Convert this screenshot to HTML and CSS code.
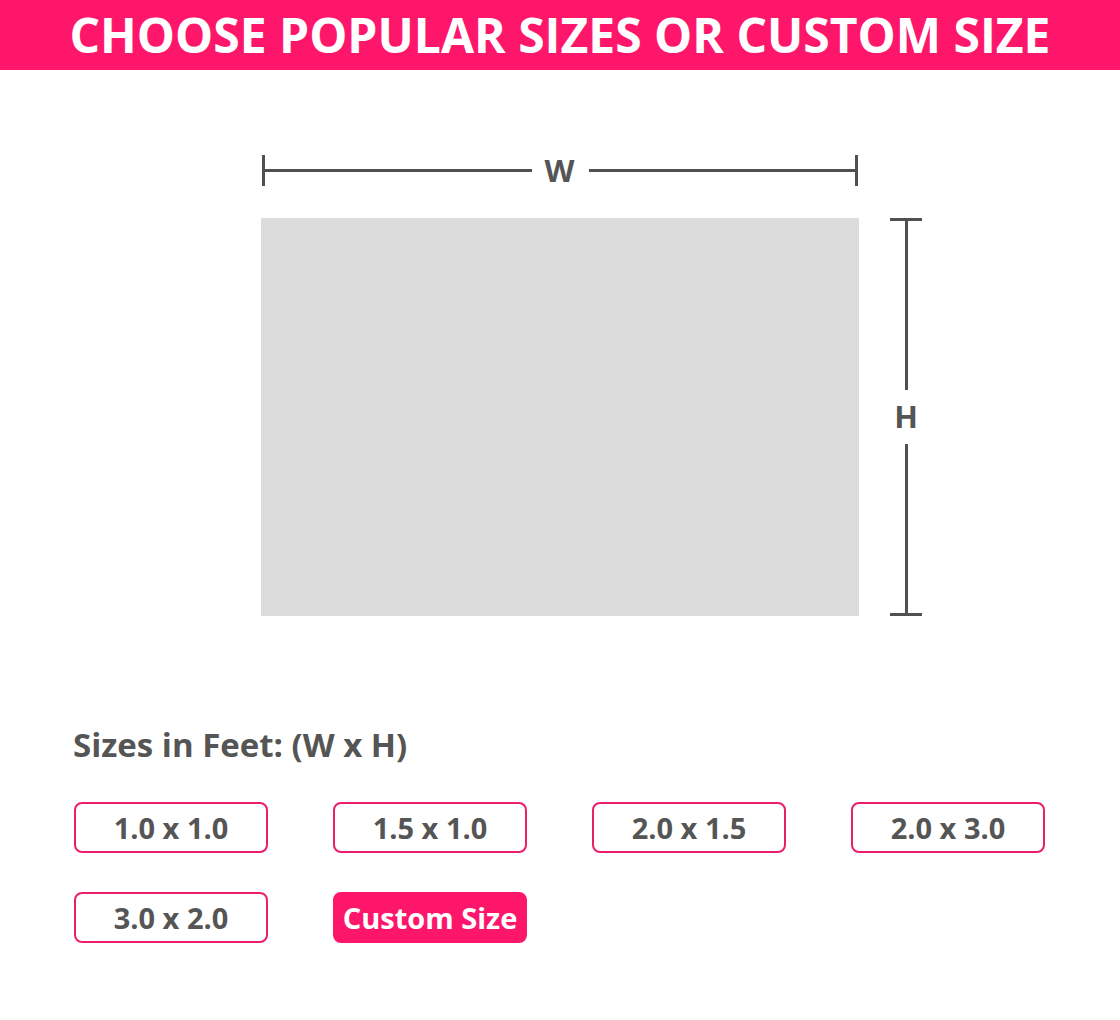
FILE: index.html
```html
<!DOCTYPE html>
<html lang="en">
<head>
<meta charset="utf-8">
<title>Choose Size</title>
<link rel="stylesheet" href="styles.css">
</head>
<body>
<header class="banner">
  <h1 class="banner-title">CHOOSE POPULAR SIZES OR CUSTOM SIZE</h1>
</header>
<main class="content">
  <section class="diagram">
    <div class="dim-w">
      <span class="tick-v"></span>
      <span class="line-h"></span>
      <span class="dim-label w-label">W</span>
      <span class="line-h"></span>
      <span class="tick-v"></span>
    </div>
    <div class="spacer"></div>
    <div class="canvas"></div>
    <div class="dim-h">
      <span class="tick-h"></span>
      <span class="line-v"></span>
      <span class="dim-label h-label">H</span>
      <span class="line-v"></span>
      <span class="tick-h"></span>
    </div>
  </section>
  <section class="sizes">
    <h2 class="sizes-title">Sizes in Feet: (W x H)</h2>
    <div class="size-grid">
      <button class="size-btn">1.0 x 1.0</button>
      <button class="size-btn">1.5 x 1.0</button>
      <button class="size-btn">2.0 x 1.5</button>
      <button class="size-btn">2.0 x 3.0</button>
      <button class="size-btn">3.0 x 2.0</button>
      <button class="size-btn size-btn-active">Custom Size</button>
    </div>
  </section>
</main>
</body>
</html>
```
FILE: styles.css
```css
* { box-sizing: border-box; }
html, body { margin: 0; padding: 0; background: #ffffff; }
body {
  font-family: "Open Sans", "Liberation Sans", sans-serif;
  color: #555555;
  width: 1120px;
}
.banner {
  background: #fe166b;
  height: 70px;
  display: flex;
  align-items: center;
  justify-content: center;
}
.banner-title {
  margin: 0;
  color: #ffffff;
  font-size: 48px;
  font-weight: 700;
  line-height: 1;
  letter-spacing: 0;
}
.content {
  padding-top: 85px;
}
.diagram {
  display: grid;
  grid-template-columns: 598px 32px;
  grid-template-rows: 30px 398px;
  column-gap: 31px;
  row-gap: 33px;
  margin-left: 261px;
}
.dim-w {
  display: flex;
  align-items: center;
  padding: 0 1px;
}
.tick-v {
  width: 3px;
  height: 31px;
  background: #505050;
  flex: none;
}
.line-h {
  flex: 1;
  height: 3px;
  background: #505050;
}
.dim-label {
  font-weight: 700;
  font-size: 31px;
  line-height: 1;
  color: #555555;
  flex: none;
}
.w-label { padding: 0 14px 0 13px; }
.canvas {
  background: #dcdcdc;
}
.dim-h {
  display: flex;
  flex-direction: column;
  align-items: center;
}
.tick-h {
  width: 32px;
  height: 3px;
  background: #505050;
  flex: none;
}
.line-v {
  flex: 1;
  width: 3px;
  background: #505050;
}
.h-label { padding: 11px 0 12px; }
.sizes {
  padding: 110px 0 0 73px;
}
.sizes-title {
  margin: 0;
  font-size: 33px;
  font-weight: 700;
  line-height: 38px;
  color: #555555;
}
.size-grid {
  margin-top: 38px;
  display: grid;
  grid-template-columns: repeat(4, 194px);
  column-gap: 65px;
  row-gap: 39px;
  padding-left: 1px;
}
.size-btn {
  height: 51px;
  border: 2px solid #ec1e6c;
  border-radius: 8px;
  background: #ffffff;
  font-family: "Open Sans", "Liberation Sans", sans-serif;
  font-weight: 700;
  font-size: 29px;
  color: #555555;
  padding: 0;
  display: flex;
  align-items: center;
  justify-content: center;
}
.size-btn-active {
  background: #fe166b;
  border-color: #fe166b;
  color: #ffffff;
}
```
